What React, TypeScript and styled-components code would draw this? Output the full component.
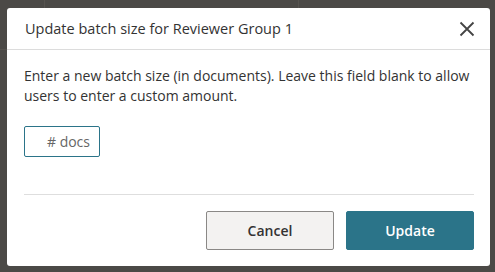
import React from "react";
import styled, { createGlobalStyle } from "styled-components";

const Global = createGlobalStyle`
  html, body { margin: 0; padding: 0; background: #4b4946; }
  body { width: 495px; height: 272px; overflow: hidden; font-family: "Open Sans", "Noto Sans", sans-serif; }
  * { box-sizing: border-box; }
`;

const Backdrop = styled.div`
  position: relative;
  width: 495px;
  height: 272px;
  padding: 8px 0 0 7px;
`;

const GhostLine = styled.div<{ $v?: boolean }>`
  position: absolute;
  background: #56534f;
  ${(p) => (p.$v ? "width: 1px; height: 8px; top: 0;" : "height: 1px; width: 7px; left: 0;")}
`;

const Dialog = styled.div`
  position: relative;
  width: 483px;
  height: 258px;
  background: #fff;
  border-radius: 3px;
  display: flex;
  flex-direction: column;
`;

const Header = styled.div`
  height: 42px;
  border-bottom: 1px solid #dcdcdc;
  display: flex;
  align-items: center;
  justify-content: space-between;
  padding: 0 14px 0 18px;
`;

const Title = styled.h2`
  margin: 0;
  font-size: 14.5px;
  font-weight: 400;
  color: #333;
  line-height: 22px;
`;

const CloseButton = styled.button`
  width: 18px;
  height: 18px;
  padding: 0;
  border: 0;
  background: none;
  display: flex;
  align-items: center;
  justify-content: center;
  color: #444;
`;

const Body = styled.div`
  padding: 16px 16px 0 17px;
  display: flex;
  flex-direction: column;
  align-items: flex-start;
`;

const Text = styled.p`
  margin: 0;
  font-size: 14px;
  line-height: 20px;
  color: #333;
`;

const Input = styled.input`
  margin-top: 20px;
  width: 76px;
  height: 31px;
  border: 1px solid #2b7489;
  border-radius: 2px;
  padding: 0 9px 0 8px;
  text-align: right;
  font-family: inherit;
  font-size: 14px;
  color: #333;
  outline: none;
  &::placeholder { color: #666; }
`;

const Footer = styled.div`
  margin: 37px 16px 0 17px;
  border-top: 1px solid #dedede;
  padding-top: 16px;
  display: flex;
  justify-content: flex-end;
  gap: 12px;
`;

const Button = styled.button<{ $primary?: boolean }>`
  width: 128px;
  height: 39px;
  border-radius: 2px;
  font-family: inherit;
  font-size: 14px;
  font-weight: 600;
  border: 1px solid ${(p) => (p.$primary ? "#2b7489" : "#8a8886")};
  background: ${(p) => (p.$primary ? "#2b7489" : "#f3f2f1")};
  color: ${(p) => (p.$primary ? "#fff" : "#333")};
`;

export default function App() {
  return (
    <>
      <Global />
      <Backdrop>
        <GhostLine $v style={{ left: 44 }} />
        <GhostLine $v style={{ left: 298 }} />
        <GhostLine style={{ top: 49 }} />
        <Dialog role="dialog">
          <Header>
            <Title>Update batch size for Reviewer Group 1</Title>
            <CloseButton aria-label="Close">
              <svg width="16" height="16" viewBox="0 0 16 16">
                <path d="M1.5 1.5 L14.5 14.5 M14.5 1.5 L1.5 14.5" stroke="currentColor" strokeWidth="1.8" fill="none" />
              </svg>
            </CloseButton>
          </Header>
          <Body>
            <Text>
              Enter a new batch size (in documents). Leave this field blank to allow users to enter a custom amount.
            </Text>
            <Input placeholder="# docs" />
          </Body>
          <Footer>
            <Button>Cancel</Button>
            <Button $primary>Update</Button>
          </Footer>
        </Dialog>
      </Backdrop>
    </>
  );
}
